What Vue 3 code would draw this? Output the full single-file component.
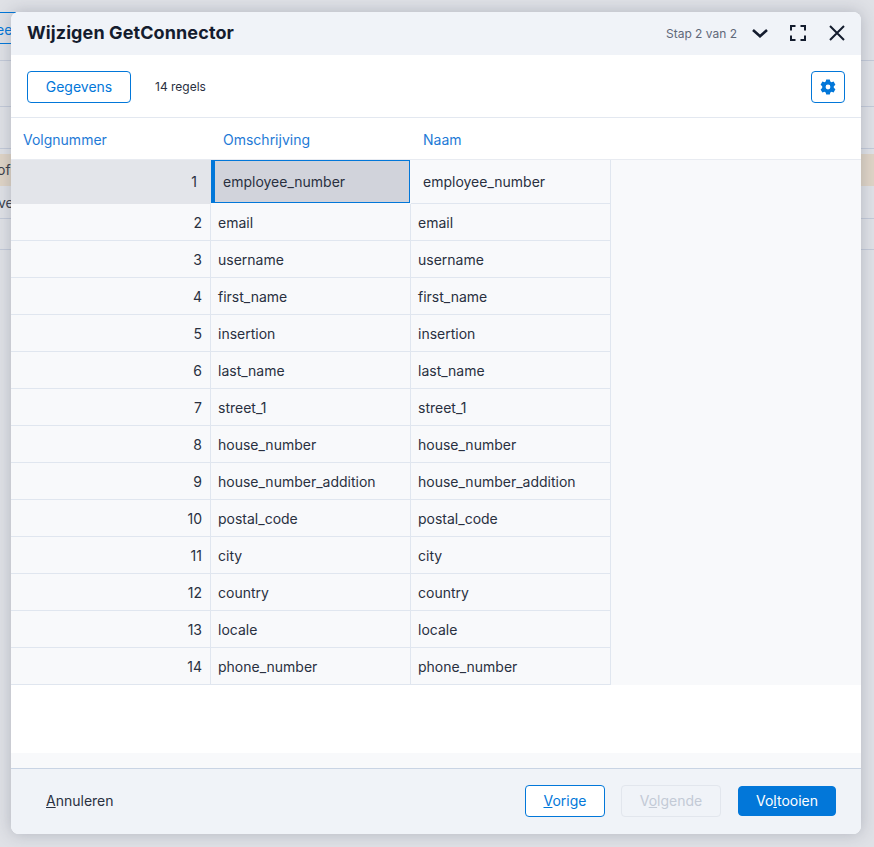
<script setup>
const names = ['employee_number','email','username','first_name','insertion','last_name','street_1','house_number','house_number_addition','postal_code','city','country','locale','phone_number']
const rows = names.map((name, i) => ({ nr: i + 1, name }))
const backLines = [60, 106, 148, 218, 249]
</script>

<template>
  <div class="page">
    <div class="under" aria-hidden="true">
      <span class="under-line" v-for="y in backLines" :key="y" :style="{ top: y + 'px' }"></span>
      <span class="under-tab">eer</span>
      <div class="under-hl"><span>of</span></div>
      <span class="under-txt">ve</span>
    </div>
    <section class="modal">
      <header class="head">
        <h1>Wijzigen GetConnector</h1>
        <span class="step">Stap 2 van 2</span>
        <svg class="ic chev" width="18" height="12" viewBox="0 0 18 12"><path d="M2 3 L9 9.2 L16 3" fill="none" stroke="#141c2e" stroke-width="2.6"/></svg>
        <svg class="ic full" width="16" height="16" viewBox="0 0 16 16"><path d="M1 5.5V1H5.5M10.5 1H15V5.5M15 10.5V15H10.5M5.5 15H1V10.5" fill="none" stroke="#141c2e" stroke-width="2"/></svg>
        <svg class="ic close" width="16" height="16" viewBox="0 0 16 16"><path d="M1 1 L15 15 M15 1 L1 15" fill="none" stroke="#141c2e" stroke-width="2"/></svg>
      </header>
      <div class="toolbar">
        <button class="btn outline data">Gegevens</button>
        <span class="count">14 regels</span>
        <button class="btn outline gear" aria-label="Instellingen">
          <svg width="16" height="16" viewBox="0 0 16 16"><path fill="#0277d9" fill-rule="evenodd" d="M6.2.4h3.6l.5 2.1 1.2.7 2.1-.6 1.8 3.1-1.6 1.5v1.6l1.6 1.5-1.8 3.1-2.1-.6-1.2.7-.5 2.1H6.2l-.5-2.1-1.2-.7-2.1.6L.6 10.4l1.6-1.5V7.3L.6 5.7l1.8-3.1 2.1.6 1.2-.7zM8 5.6a2.4 2.4 0 1 0 0 4.8 2.4 2.4 0 0 0 0-4.8z"/></svg>
        </button>
      </div>
      <div class="table">
        <div class="thead">
          <span>Volgnummer</span><span>Omschrijving</span><span>Naam</span>
        </div>
        <div class="tbody">
          <div class="grid">
            <div v-for="r in rows" :key="r.nr" class="row" :class="{ active: r.nr === 1 }">
              <div class="cell num">{{ r.nr }}</div>
              <div class="cell desc">{{ r.name }}</div>
              <div class="cell">{{ r.name }}</div>
            </div>
          </div>
        </div>
        <div class="blank"></div>
      </div>
      <div class="strip"></div>
      <footer class="foot">
        <a class="cancel"><u>A</u>nnuleren</a>
        <button class="btn outline prev"><u>V</u>orige</button>
        <button class="btn next" disabled>V<u>o</u>lgende</button>
        <button class="btn done">Vo<u>l</u>tooien</button>
      </footer>
    </section>
  </div>
</template>

<style>
html, body { margin: 0; padding: 0; }
</style>

<style scoped>
.page {
  position: relative;
  width: 874px;
  height: 847px;
  overflow: hidden;
  background: #dfe1e6;
  font-family: Inter, "Liberation Sans", sans-serif;
  color: #29303f;
  padding: 12px 13px 13px 11px;
  box-sizing: border-box;
}
.under { position: absolute; inset: 0; }
.under::before { content: ""; position: absolute; left: 0; top: 12px; width: 16px; height: 1px; background: #0277d9; }
.under::after { content: ""; position: absolute; left: 0; top: 43px; width: 16px; height: 1px; background: #0277d9; }
.under-line { position: absolute; left: 0; right: 0; height: 1px; background: #c3cad8; }
.under-tab { position: absolute; left: -4px; top: 21px; font-size: 14px; color: #0277d9; }
.under-hl { position: absolute; left: 0; right: 0; top: 154px; height: 32px; background: #dfd4c6; font-size: 14px; line-height: 32px; color: #3a3f4a; }
.under-hl span { position: absolute; left: -3px; }
.under-txt { position: absolute; left: -2px; top: 194px; font-size: 14px; color: #3a3f4a; }
.modal {
  position: relative;
  height: 822px;
  border-radius: 8px;
  overflow: hidden;
  background: #fff;
  display: flex;
  flex-direction: column;
  box-shadow: 0 0 16px rgba(60, 70, 90, .28);
}
.head {
  height: 43px;
  flex: none;
  display: flex;
  align-items: center;
  background: #f0f3f8;
  padding: 0 16px;
}
.head h1 {
  margin: 0 0 1px;
  flex: 1;
  font-size: 18px;
  letter-spacing: .1px;
  line-height: 24px;
  font-weight: 700;
  color: #141c2e;
}
.step { font-size: 12px; color: #5f6878; margin: 0 14px 1px 0; }
.ic { flex: none; display: block; margin-bottom: 1px; }
.chev { margin-right: 21px; }
.full { margin-right: 23px; }
.toolbar {
  box-sizing: border-box;
  height: 63px;
  flex: none;
  display: flex;
  align-items: center;
  padding: 1px 16px 0;
  border-bottom: 1px solid #e3e8f0;
}
.btn {
  box-sizing: border-box;
  font-family: inherit;
  font-size: 14px;
  height: 32px;
  border-radius: 4px;
  padding: 0;
  background: #fff;
  border: 1px solid #0277d9;
  color: #0277d9;
}
.data { width: 104px; }
.count { margin-left: 24px; font-size: 12px; color: #29303f; flex: 1; }
.gear { width: 34px; display: flex; align-items: center; justify-content: center; }
.table { flex: 1; display: flex; flex-direction: column; min-height: 0; }
.thead {
  box-sizing: border-box;
  height: 42px;
  flex: none;
  display: grid;
  grid-template-columns: 200px 200px 200px;
  align-items: center;
  padding-top: 2px;
  border-bottom: 1px solid #e8ebf1;
  font-size: 14px;
  color: #1e7ad6;
}
.thead span { padding-left: 12px; }
.tbody { flex: none; background: #f8f9fb; }
.grid { width: 600px; }
.row { display: grid; grid-template-columns: 200px 200px 200px; height: 37px; }
.cell {
  box-sizing: border-box;
  display: flex;
  align-items: center;
  padding-left: 7px;
  font-size: 14px;
  border-right: 1px solid #e0e6ef;
  border-bottom: 1px solid #e0e6ef;
  white-space: nowrap;
}
.num { justify-content: flex-end; padding: 0 8px 0 0; }
.row.active { height: 44px; }
.active .num { background: #e3e5ea; border-color: transparent; border-right: none; padding-right: 14px; }
.active .desc {
  background: #d1d3db;
  border: 1px solid #0277d9;
  border-left: 4px solid #0277d9;
  padding-left: 8px;
  margin: 0 1px 1px 0;
}
.active .cell:last-child { padding-left: 12px; }
.blank { flex: 1; }
.strip { height: 15px; flex: none; background: #f8f9fb; border-bottom: 1px solid #c9d4e4; }
.foot {
  box-sizing: border-box;
  height: 65px;
  flex: none;
  display: flex;
  align-items: center;
  gap: 16px;
  background: #f0f3f8;
  padding: 0 25px 2px 35px;
}
.cancel { flex: 1; font-size: 14px; color: #29303f; }
.prev { width: 80px; }
.next {
  width: 100px;
  background: transparent;
  border-color: #e2e6ed;
  color: #c3cad6;
}
.done {
  width: 98px;
  height: 30px;
  margin-left: 1px;
  background: #0277d9;
  border-color: #0277d9;
  color: #fff;
}
</style>
